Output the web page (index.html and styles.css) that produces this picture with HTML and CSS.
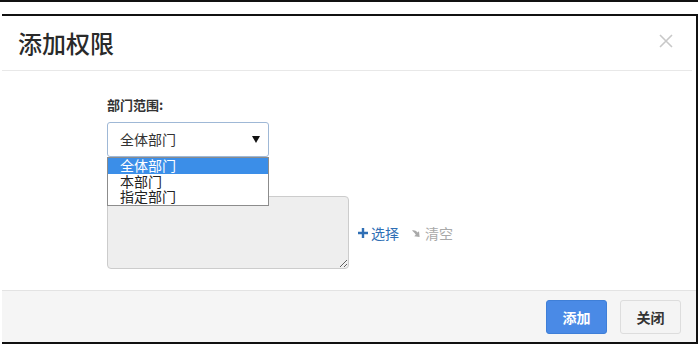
FILE: index.html
```html
<!DOCTYPE html>
<html lang="zh-CN">
<head>
  <meta charset="UTF-8">
  <title>添加权限</title>
  <link rel="stylesheet" href="styles.css">
</head>
<body>
  <div class="topline"></div>

  <div class="modal">
    <div class="modal-header">
      <h4 class="modal-title">添加权限</h4>
      <span class="close">
        <svg width="16" height="16" viewBox="0 0 16 16"><path d="M2 2L14 14M14 2L2 14" stroke="#c8c8c8" stroke-width="1.6"/></svg>
      </span>
    </div>

    <div class="modal-body">
      <div class="form">
        <label class="label">部门范围:</label>
        <div class="select-wrap">
          <div class="select">全体部门<span class="caret"></span></div>
          <ul class="options">
            <li class="active">全体部门</li>
            <li>本部门</li>
            <li>指定部门</li>
          </ul>
        </div>
        <div class="picker">
          <textarea class="dept-box" readonly></textarea>
          <a class="link add">
            <svg width="12" height="12" viewBox="0 0 12 12"><path d="M6 1V11M1 6H11" stroke="#2f6fb5" stroke-width="2.4"/></svg>选择
          </a>
          <a class="link clear">
            <svg width="12" height="12" viewBox="0 0 12 12"><path d="M1 3.5C3 3 5 3.5 6.5 5.5L8 4.2L8.6 10L3.2 9.2L4.8 7.8C3.8 6 2.5 5 1 3.5Z" fill="#a9a9a9"/></svg>清空
          </a>
        </div>
      </div>
    </div>

    <div class="modal-footer">
      <button class="btn btn-primary">添加</button>
      <button class="btn btn-default">关闭</button>
    </div>
  </div>
</body>
</html>
```

FILE: styles.css
```css
body { margin: 0; background: #fff; font-family: "Noto Sans CJK SC", "Noto Sans", sans-serif; color: #333; }
.topline { height: 2px; background: #111; }
.modal { margin: 12px 0 0 2px; border-top: 2px solid #111; border-right: 2px solid #111; border-bottom: 2px solid #111; height: 330px; display: flex; flex-direction: column; box-sizing: border-box; }
.modal-header { height: 54px; flex: none; border-bottom: 1px solid #e8e8e8; display: flex; align-items: center; justify-content: space-between; padding: 0 18px 0 16px; margin-right: 4px; }
.modal-title { margin: 0; font-size: 24px; font-weight: 500; color: #2a2a2a; line-height: 30px; }
.close { display: flex; margin-top: -4px; }
.modal-body { flex: 1; padding: 24px 0 0 105px; }
.form { width: 360px; }
.label { display: block; font-size: 13px; font-weight: bold; color: #333; line-height: 20px; margin-bottom: 7px; }
.select-wrap { position: relative; width: 162px; }
.select { height: 35px; box-sizing: border-box; border: 1px solid #9fb8d6; border-radius: 3px; padding: 0 8px 0 12px; font-size: 14px; line-height: 33px; display: flex; justify-content: space-between; align-items: center; }
.caret { width: 0; height: 0; border-left: 4px solid transparent; border-right: 4px solid transparent; border-top: 7px solid #111; }
.options { position: absolute; top: 35px; left: 0; right: 0; margin: 0; padding: 0; list-style: none; background: #fff; border: 1px solid #8c8c8c; font-size: 14px; line-height: 15.6px; z-index: 2; }
.options li { padding: 0 0 0 12px; height: 15.6px; color: #222; }
.options li.active { background: #3b8ee8; color: #fff; }
.picker { display: flex; align-items: center; margin-top: 39px; }
.dept-box { width: 242px; height: 73px; box-sizing: border-box; background: #eee; border: 1px solid #ccc; border-radius: 4px; margin: 0; }
.link { display: flex; align-items: center; gap: 2px; font-size: 14px; margin-left: 8px; cursor: pointer; }
.link.add { color: #2f6fb5; }
.link.clear { color: #a9a9a9; margin-left: 12px; }
.modal-footer { height: 51px; flex: none; border-top: 1px solid #e3e3e3; background: #f5f5f5; display: flex; justify-content: flex-end; align-items: center; gap: 13px; padding: 0 15px; }
.btn { width: 61px; height: 34px; font-family: inherit; font-size: 14px; font-weight: bold; border-radius: 3px; cursor: pointer; }
.btn-primary { background: #4a8ae6; border: 1px solid #3f7fd8; color: #fff; }
.btn-default { background: #f4f4f4; border: 1px solid #ddd; color: #333; }
```
